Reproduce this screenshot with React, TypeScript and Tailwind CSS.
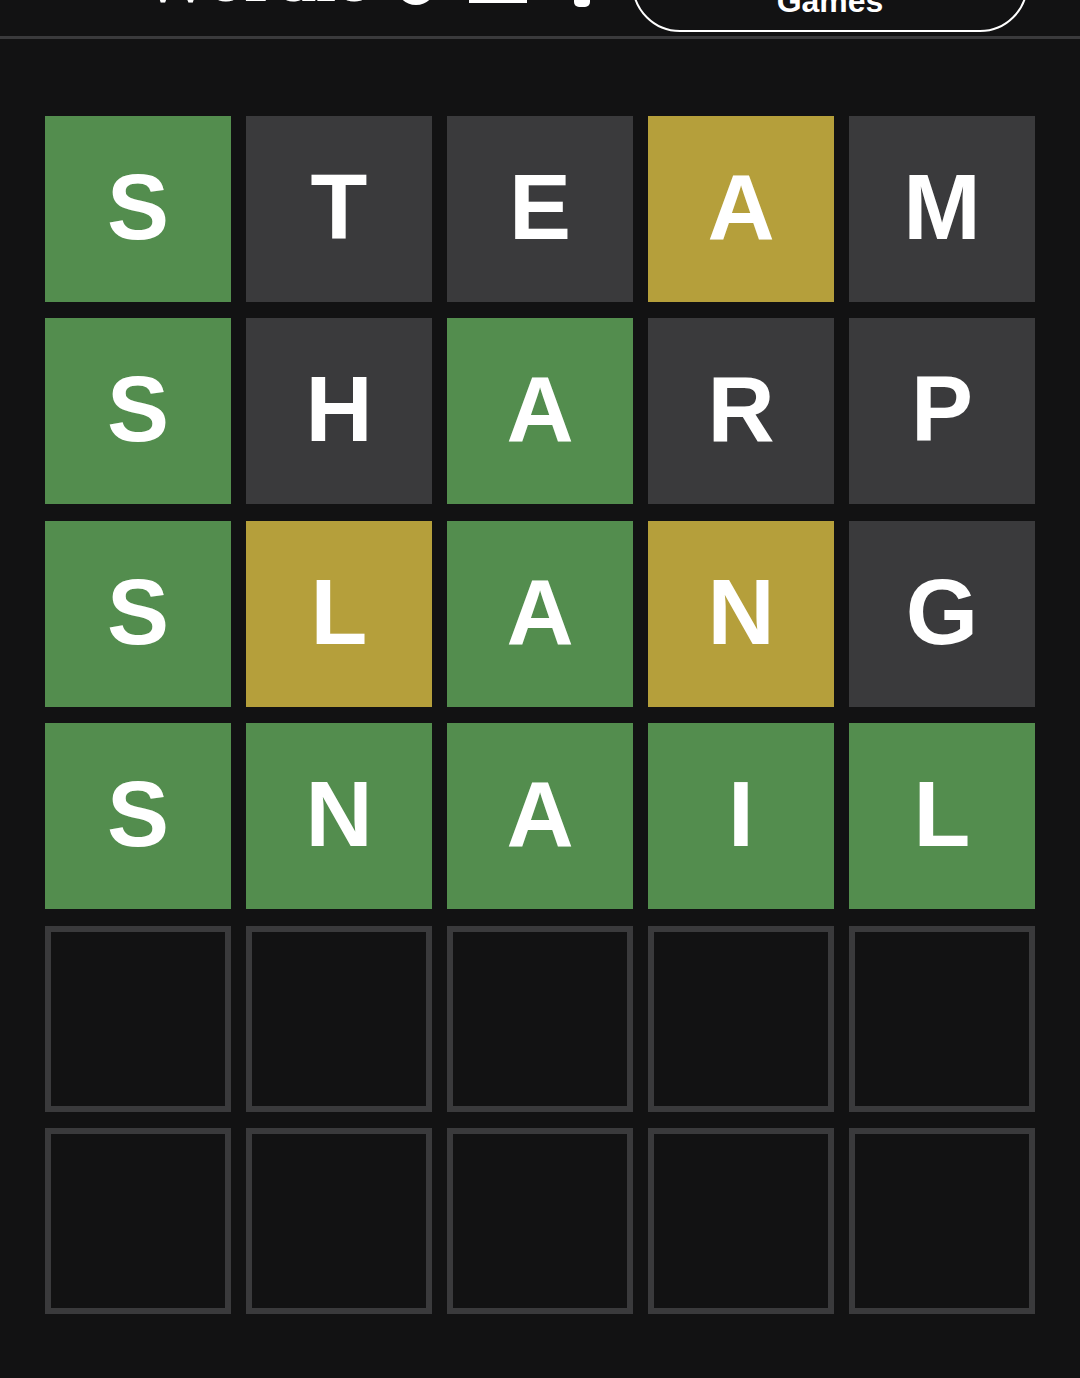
import React from 'react';

type State = 'correct' | 'present' | 'absent' | 'empty';

const rows: { letter: string; state: State }[][] = [
  [
    { letter: 'S', state: 'correct' },
    { letter: 'T', state: 'absent' },
    { letter: 'E', state: 'absent' },
    { letter: 'A', state: 'present' },
    { letter: 'M', state: 'absent' },
  ],
  [
    { letter: 'S', state: 'correct' },
    { letter: 'H', state: 'absent' },
    { letter: 'A', state: 'correct' },
    { letter: 'R', state: 'absent' },
    { letter: 'P', state: 'absent' },
  ],
  [
    { letter: 'S', state: 'correct' },
    { letter: 'L', state: 'present' },
    { letter: 'A', state: 'correct' },
    { letter: 'N', state: 'present' },
    { letter: 'G', state: 'absent' },
  ],
  [
    { letter: 'S', state: 'correct' },
    { letter: 'N', state: 'correct' },
    { letter: 'A', state: 'correct' },
    { letter: 'I', state: 'correct' },
    { letter: 'L', state: 'correct' },
  ],
  Array.from({ length: 5 }, () => ({ letter: '', state: 'empty' as State })),
  Array.from({ length: 5 }, () => ({ letter: '', state: 'empty' as State })),
];

const tileClass: Record<State, string> = {
  correct: 'bg-[#538d4e]',
  present: 'bg-[#b59f3b]',
  absent: 'bg-[#3a3a3c]',
  empty: 'border-[6px] border-[#3a3a3c]',
};

const Tile: React.FC<{ letter: string; state: State }> = ({ letter, state }) => (
  <div
    className={`flex h-[186px] w-[186px] items-center justify-center pb-[3px] text-[93px] font-bold uppercase leading-none text-white ${tileClass[state]}`}
  >
    {letter}
  </div>
);

const Header: React.FC = () => (
  <header className="flex h-[39px] items-end overflow-hidden border-b-[3px] border-[#3a3a3c]">
    <div className="ml-[140px] flex w-[492px] shrink-0 items-end">
      <div className="mb-[23px] flex h-[14px] items-end">
        <span className="font-['Liberation_Serif',serif] text-[72px] font-bold leading-none text-white">Wordle</span>
      </div>
      <div className="mb-[31px] ml-[28px] h-[40px] w-[40px] shrink-0 rounded-full bg-white" />
      <div className="mb-[33px] ml-[33px] h-[6px] w-[58px] shrink-0 bg-white" />
      <div className="mb-[29px] ml-[47px] h-[14px] w-[16px] shrink-0 rounded-b-[5px] bg-white" />
    </div>
    <div className="mb-[4px] flex h-[96px] w-[396px] shrink-0 items-end justify-center rounded-full border-[2.5px] border-white pb-[13px]">
      <span className="text-[32px] font-bold leading-none text-white">Games</span>
    </div>
  </header>
);

export default function App() {
  return (
    <div className="min-h-[1378px] bg-[#121213] font-['Liberation_Sans',Arial,sans-serif]">
      <Header />
      <main className="flex justify-center pt-[77px]">
        <div className="grid grid-cols-[repeat(5,186px)] gap-x-[15px] gap-y-[16.4px]">
          {rows.map((row, r) =>
            row.map((t, c) => <Tile key={`${r}-${c}`} letter={t.letter} state={t.state} />)
          )}
        </div>
      </main>
    </div>
  );
}
